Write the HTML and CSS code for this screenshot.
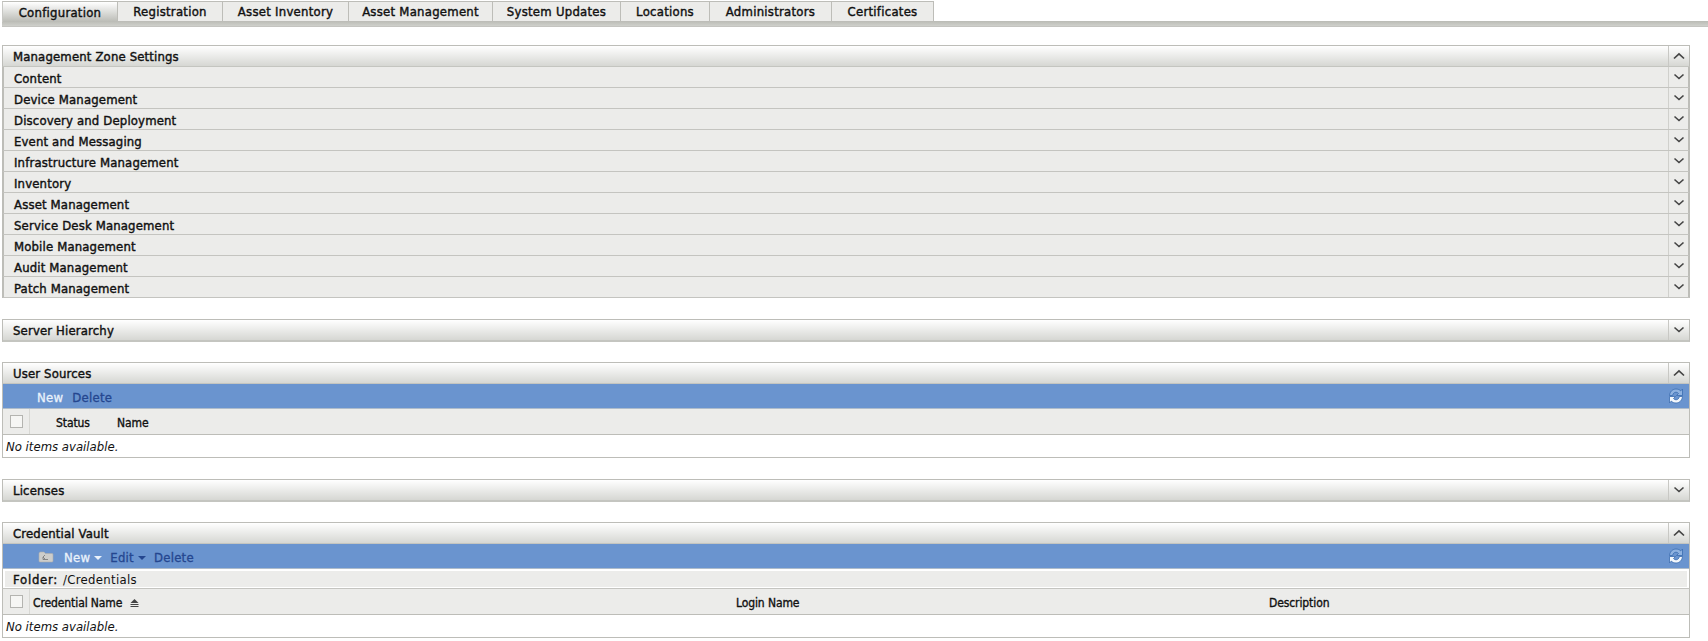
FILE: index.html
```html
<!DOCTYPE html>
<html lang="en">
<head>
<meta charset="utf-8">
<title>Configuration</title>
<link rel="stylesheet" href="styles.css">
</head>
<body>
<svg class="defs" width="0" height="0" aria-hidden="true">
  <symbol id="up" viewBox="0 0 12 8"><path d="M1 6.500 6 1.800l5 4.700" fill="none" stroke="#444" stroke-width="1.700"/></symbol>
  <symbol id="down" viewBox="0 0 12 8"><path d="M1.500 1.500 6 5.500l4.500-4" fill="none" stroke="#444" stroke-width="1.600"/></symbol>
  <symbol id="refresh" viewBox="0 0 16 16">
    <path d="M1.500 7.500C1.800 3.500 4.800 1 8 1c2 0 3.600.7 4.700 1.900L14.500 1v6.500H8.500l2-2C9.800 4.600 9 4.200 8 4.200 6.200 4.200 5 5.500 4.600 7.500z" fill="#8fb2e0" stroke="#3a6cb0" stroke-width=".8"/>
    <path d="M14.500 8.500c-.3 4-3.300 6.500-6.500 6.500-2 0-3.600-.7-4.700-1.900L1.500 15V8.500h6l-2 2c.7.900 1.500 1.300 2.500 1.300 1.800 0 3-1.300 3.400-3.300z" fill="#f2f6fb" stroke="#3a6cb0" stroke-width=".8"/>
  </symbol>
</svg>

<nav class="tabs">
  <a class="tab tab-active tab-config">Configuration</a>
  <a class="tab tab-reg">Registration</a>
  <a class="tab tab-inv">Asset Inventory</a>
  <a class="tab tab-am">Asset Management</a>
  <a class="tab tab-su">System Updates</a>
  <a class="tab tab-loc">Locations</a>
  <a class="tab tab-adm">Administrators</a>
  <a class="tab tab-cert">Certificates</a>
</nav>
<div class="tabbar"></div>

<section class="panel panel-first">
  <header class="phead"><span class="ptitle">Management Zone Settings</span><span class="toggle"><svg class="chev"><use href="#up"/></svg></span></header>
  <div class="row"><span class="rtitle">Content</span><span class="rtoggle"><svg class="chev"><use href="#down"/></svg></span></div>
  <div class="row"><span class="rtitle">Device Management</span><span class="rtoggle"><svg class="chev"><use href="#down"/></svg></span></div>
  <div class="row"><span class="rtitle">Discovery and Deployment</span><span class="rtoggle"><svg class="chev"><use href="#down"/></svg></span></div>
  <div class="row"><span class="rtitle">Event and Messaging</span><span class="rtoggle"><svg class="chev"><use href="#down"/></svg></span></div>
  <div class="row"><span class="rtitle">Infrastructure Management</span><span class="rtoggle"><svg class="chev"><use href="#down"/></svg></span></div>
  <div class="row"><span class="rtitle">Inventory</span><span class="rtoggle"><svg class="chev"><use href="#down"/></svg></span></div>
  <div class="row"><span class="rtitle">Asset Management</span><span class="rtoggle"><svg class="chev"><use href="#down"/></svg></span></div>
  <div class="row"><span class="rtitle">Service Desk Management</span><span class="rtoggle"><svg class="chev"><use href="#down"/></svg></span></div>
  <div class="row"><span class="rtitle">Mobile Management</span><span class="rtoggle"><svg class="chev"><use href="#down"/></svg></span></div>
  <div class="row"><span class="rtitle">Audit Management</span><span class="rtoggle"><svg class="chev"><use href="#down"/></svg></span></div>
  <div class="row"><span class="rtitle">Patch Management</span><span class="rtoggle"><svg class="chev"><use href="#down"/></svg></span></div>
</section>

<section class="panel panel-solo">
  <header class="phead phead-solo"><span class="ptitle">Server Hierarchy</span><span class="toggle"><svg class="chev"><use href="#down"/></svg></span></header>
</section>

<section class="panel">
  <header class="phead"><span class="ptitle">User Sources</span><span class="toggle"><svg class="chev"><use href="#up"/></svg></span></header>
  <div class="toolbar">
    <span class="tools tools-user"><span class="tool tool-on">New</span><span class="tool">Delete</span></span>
    <svg class="refresh"><use href="#refresh"/></svg>
  </div>
  <div class="thead">
    <span class="cbcell"><span class="cb"></span></span>
    <span class="th th-status">Status</span>
    <span class="th">Name</span>
  </div>
  <div class="empty">No items available.</div>
</section>

<section class="panel panel-solo">
  <header class="phead phead-solo"><span class="ptitle">Licenses</span><span class="toggle"><svg class="chev"><use href="#down"/></svg></span></header>
</section>

<section class="panel">
  <header class="phead"><span class="ptitle">Credential Vault</span><span class="toggle"><svg class="chev"><use href="#up"/></svg></span></header>
  <div class="toolbar">
    <span class="tools tools-cred">
      <svg class="folder" viewBox="0 0 16 12"><path d="M1 2.500Q1 1 2.500 1H6l1.500 1.500H14Q15 2.500 15 3.500V10Q15 11 14 11H2Q1 11 1 10z" fill="#cdcdcb" stroke="#adadad" stroke-width=".6"/><path d="M7 4 5 6l2 2M5 6v2.500h5" fill="none" stroke="#7d7d7d" stroke-width=".9"/></svg>
      <span class="tool tool-on">New<i class="caret caret-on"></i></span><span class="tool">Edit<i class="caret"></i></span><span class="tool">Delete</span>
    </span>
    <svg class="refresh"><use href="#refresh"/></svg>
  </div>
  <div class="folderline"><div class="folderbar"><b class="flabel">Folder:</b><span class="fpath">/Credentials</span></div></div>
  <div class="thead">
    <span class="cbcell"><span class="cb"></span></span>
    <span class="th th-cred">Credential Name<svg class="sort" viewBox="0 0 9 8"><path d="M4.500 0 8.500 4H.5z" fill="#444"/><path d="M.5 5h8v1h-8zM.5 7h8v1h-8z" fill="#444"/></svg></span>
    <span class="th th-login">Login Name</span>
    <span class="th">Description</span>
  </div>
  <div class="empty">No items available.</div>
</section>
</body>
</html>
```

FILE: styles.css
```css
* { box-sizing: border-box; }
html, body { margin: 0; padding: 0; background: #fff; overflow: hidden; }
body {
  width: 1708px;
  height: 641px;
  font-family: "DejaVu Sans Condensed", "DejaVu Sans", sans-serif;
  font-stretch: condensed;
  font-size: 13px;
  color: #111;
}
.defs { position: absolute; }

.tabs { display: flex; height: 20px; margin: 1px 0 0 2px; position: relative; z-index: 1; }
.tab {
  display: flex;
  align-items: center;
  justify-content: center;
  height: 21px;
  border: 1px solid #bdbdb8;
  border-left: 0;
  background: #ececea;
  letter-spacing: 0.25px;
  -webkit-text-stroke: 0.4px #111;
}
.tab-active { background: linear-gradient(#fff, #babbb5); border-bottom: 0; border-left: 1px solid #c8c8c4; }
.tab-config { width: 116px; }
.tab-reg { width: 105px; }
.tab-inv { width: 126px; }
.tab-am { width: 144px; }
.tab-su { width: 128px; }
.tab-loc { width: 89px; }
.tab-adm { width: 122px; }
.tab-cert { width: 102px; }
.tabbar { height: 6px; margin-left: 2px; background: linear-gradient(#babbb5, #cfd0cb); border-bottom: 1px solid #c4c4c0; }

.panel { width: 1688px; margin: 20px 0 0 2px; }
.panel-first { margin-top: 18px; }
.panel-solo { margin-top: 21px; }
.phead {
  display: flex;
  align-items: center;
  height: 22px;
  border: 1px solid #bdbdb8;
  border-bottom: 1px solid #c4c5c0;
  background: linear-gradient(#fff, #d6d7d3);
}
.phead-solo { height: 23px; border-bottom-width: 2px; }
.ptitle { flex: 1; padding: 1px 0 0 10px; letter-spacing: 0.15px; -webkit-text-stroke: 0.4px #111; }
.toggle { display: flex; align-items: center; justify-content: center; width: 21px; height: 100%; border-left: 1px solid #c8c8c4; }
.chev { width: 12px; height: 8px; }

.row {
  display: flex;
  align-items: center;
  height: 21px;
  border-left: 2px solid #bdbdb8;
  border-right: 2px solid #bdbdb8;
  border-bottom: 1px solid #c4c4c0;
  background: #ececea;
}
.rtitle { flex: 1; padding: 2px 0 0 10px; letter-spacing: 0.15px; -webkit-text-stroke: 0.4px #111; }
.rtoggle { display: flex; align-items: center; justify-content: center; width: 20px; height: 100%; border-left: 1px solid #d0d0cc; }

.toolbar {
  display: flex;
  align-items: center;
  justify-content: space-between;
  height: 25px;
  padding-right: 5px;
  background: #6a94cf;
  border-left: 1px solid #bdbdb8;
  border-right: 1px solid #bdbdb8;
  border-bottom: 1px solid #aebccb;
}
.tools { display: flex; align-items: center; letter-spacing: 0.25px; color: #24468f; padding-top: 3px; -webkit-text-stroke: 0.3px currentColor; }
.tools-user { padding-left: 34px; gap: 9px; }
.tools-cred { padding-left: 35px; gap: 8px; }
.tool { display: flex; align-items: center; }
.tool-on { color: #eaf2fb; }
.caret { width: 0; height: 0; margin-left: 4px; border: 4px solid transparent; border-top-color: currentColor; border-bottom: 0; }
.caret-on { color: #eaf2fb; }
.refresh { width: 16px; height: 16px; }
.folder { width: 16px; height: 12px; margin: -1px 2px 0 0; }

.folderline { height: 20px; padding: 2px 2px 1px 2px; border-left: 1px solid #bdbdb8; border-right: 1px solid #bdbdb8; background: #fff; border-bottom: 1px solid #c4c4c0; }
.folderbar { display: flex; align-items: center; height: 16px; padding-left: 8px; background: #ececea; }
.flabel { font-weight: 400; letter-spacing: 0.75px; margin-right: 5px; -webkit-text-stroke: 0.4px #111; }
.fpath { letter-spacing: 0.3px; }

.thead {
  display: flex;
  align-items: center;
  height: 26px;
  background: #ececea;
  border-left: 1px solid #bdbdb8;
  border-right: 1px solid #bdbdb8;
  border-bottom: 1px solid #bdbdb8;
}
.cbcell { display: flex; align-items: center; justify-content: center; width: 27px; height: 100%; border-right: 1px solid #d8d8d4; }
.cb { width: 13px; height: 13px; background: #f6f6f4; border: 1px solid #b4b4b0; }
.th { padding-top: 2px; font-size: 12px; letter-spacing: -0.1px; -webkit-text-stroke: 0.35px #111; }
.th-status { margin-left: 26px; width: 61px; }
.th-cred { display: flex; align-items: center; margin-left: 3px; width: 703px; }
.sort { width: 9px; height: 8px; margin-left: 8px; }
.th-login { width: 533px; }
.empty {
  display: flex;
  align-items: center;
  height: 23px;
  padding: 1px 0 0 3px;
  font-style: italic;
  border: 1px solid #bdbdb8;
  border-top: 0;
}
```
